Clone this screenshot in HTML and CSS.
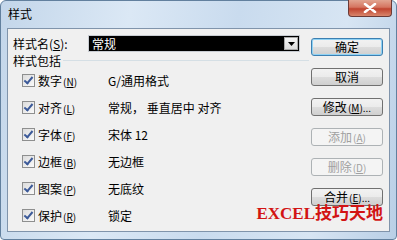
FILE: index.html
```html
<!DOCTYPE html>
<html lang="zh-CN">
<head>
  <meta charset="UTF-8">
  <title>样式</title>
  <link rel="stylesheet" href="styles.css">
</head>
<body>

  <div class="window">
    <div class="titlebar">
      <span class="title">样式</span>
      <div class="close">
        <svg width="14" height="10" viewBox="0 0 14 10">
          <path d="M2 1 L12 9 M12 1 L2 9" stroke="#fff" stroke-width="2.6" stroke-linecap="round"/>
        </svg>
      </div>
    </div>

    <div class="client">
      <div class="main">
        <div class="name-row">
          <span class="name-label">样式名(<u>S</u>):</span>
          <div class="combo">
            <span class="combo-text">常规</span>
            <span class="combo-btn">
              <svg width="7" height="4" viewBox="0 0 7 4"><path d="M0 0 H7 L3.5 4 Z" fill="#000"/></svg>
            </span>
          </div>
        </div>

        <div class="group-title">
          <span>样式包括</span>
          <span class="group-line"></span>
        </div>

        <ul class="rows">
          <li><span class="check"></span><span class="item">数字<small>(<u>N</u>)</small></span><span class="value">G/通用格式</span></li>
          <li><span class="check"></span><span class="item">对齐<small>(<u>L</u>)</small></span><span class="value">常规， 垂直居中 对齐</span></li>
          <li><span class="check"></span><span class="item">字体<small>(<u>F</u>)</small></span><span class="value">宋体 12</span></li>
          <li><span class="check"></span><span class="item">边框<small>(<u>B</u>)</small></span><span class="value">无边框</span></li>
          <li><span class="check"></span><span class="item">图案<small>(<u>P</u>)</small></span><span class="value">无底纹</span></li>
          <li><span class="check"></span><span class="item">保护<small>(<u>R</u>)</small></span><span class="value">锁定</span></li>
        </ul>
      </div>

      <div class="buttons">
        <button class="btn default">确定</button>
        <button class="btn">取消</button>
        <button class="btn">修改<small>(<u>M</u>)...</small></button>
        <button class="btn" disabled>添加<small>(<u>A</u>)</small></button>
        <button class="btn" disabled>删除<small>(<u>D</u>)</small></button>
        <button class="btn">合并<small>(<u>E</u>)...</small></button>
      </div>

      <div class="stamp">EXCEL技巧天地</div>
    </div>
  </div>

</body>
</html>
```

FILE: styles.css
```css
body {
  margin: 0;
  background: #ffffff;
  font-family: "Noto Sans CJK SC", "DejaVu Sans", sans-serif;
  font-size: 12px;
  color: #000;
}

.window {
  width: 397px;
  height: 240px;
  box-sizing: border-box;
  border: 1px solid #62809e;
  border-radius: 6px 6px 4px 4px;
  background: linear-gradient(100deg, #c3d6ea 0%, #dbe8f5 30%, #c9dbee 55%, #d7e5f3 80%, #b9cfe6 100%);
  display: flex;
  flex-direction: column;
}

.titlebar {
  height: 27px;
  display: flex;
  align-items: flex-start;
  justify-content: space-between;
}

.title {
  margin: 5px 0 0 7px;
  font-size: 12px;
  line-height: 16px;
  color: #000;
}

.close {
  width: 44px;
  height: 17px;
  margin-right: 4px;
  margin-top: -1px;
  box-sizing: border-box;
  border: 1px solid #6b3a36;
  border-top: none;
  border-radius: 0 0 4px 4px;
  background: linear-gradient(#e2a591 0%, #d57560 45%, #c0442f 55%, #d9866c 100%);
  display: flex;
  align-items: center;
  justify-content: center;
}

.client {
  position: relative;
  margin: 0 6px;
  height: 204px;
  box-sizing: border-box;
  border: 1px solid #8094ab;
  background: #f0f0f0;
  display: flex;
}

.main {
  flex: 1;
  padding: 6px 0 0 5px;
}

.name-row {
  display: flex;
  align-items: center;
  height: 17px;
}

.name-label {
  width: 75px;
  line-height: 17px;
}

.combo {
  width: 212px;
  height: 17px;
  box-sizing: border-box;
  border: 1px solid #c8ccd2;
  background: #000;
  display: flex;
  align-items: center;
  justify-content: space-between;
}

.combo-text {
  color: #fff;
  margin-left: 3px;
  line-height: 15px;
}

.combo-btn {
  width: 14px;
  height: 13px;
  margin-right: 1px;
  background: linear-gradient(#f4f4f4, #dcdcdc);
  border: 1px solid #a8a8a8;
  box-sizing: border-box;
  display: flex;
  align-items: center;
  justify-content: center;
}

.group-title {
  display: flex;
  align-items: center;
  height: 14px;
  margin-top: 1px;
}

.group-line {
  flex: 1;
  height: 0;
  border-top: 1px solid #d5dfe5;
  margin: 0 2px 0 2px;
}

.rows {
  list-style: none;
  margin: 0;
  padding: 0;
}

.rows li {
  display: flex;
  align-items: center;
  height: 27px;
}

.check {
  width: 13px;
  height: 13px;
  box-sizing: border-box;
  margin: 0 3px 0 9px;
  border: 1px solid #8e8f8f;
  background: linear-gradient(135deg, #dcdcdc, #fafafa);
  position: relative;
}

.check::after {
  content: "";
  position: absolute;
  left: 3px;
  top: 0;
  width: 3px;
  height: 7px;
  border: solid #3c5a99;
  border-width: 0 2px 2px 0;
  transform: rotate(40deg);
}

.item {
  width: 70px;
}

small {
  font-size: 10px;
  margin-left: 1px;
}

.buttons {
  width: 72px;
  margin-right: 6px;
  padding-top: 9px;
  display: flex;
  flex-direction: column;
  gap: 12px;
}

.btn {
  height: 18px;
  padding: 0;
  font-family: inherit;
  font-size: 12px;
  line-height: 16px;
  color: #000;
  border: 1px solid #707070;
  border-radius: 3px;
  background: linear-gradient(#f2f2f2 0%, #ebebeb 50%, #dddddd 51%, #cfcfcf 100%);
}

.btn.default {
  border-color: #3c7fb1;
  box-shadow: inset 0 0 0 1px #8fd2f4;
}

.btn:disabled {
  color: #a0a0a0;
  border-color: #adb2b5;
  background: #f4f4f4;
}

.stamp {
  position: absolute;
  right: 6px;
  bottom: 7px;
  font-family: "Liberation Serif", "Noto Sans CJK SC", serif;
  font-weight: bold;
  font-size: 17px;
  line-height: 20px;
  color: #d21414;
}
```
